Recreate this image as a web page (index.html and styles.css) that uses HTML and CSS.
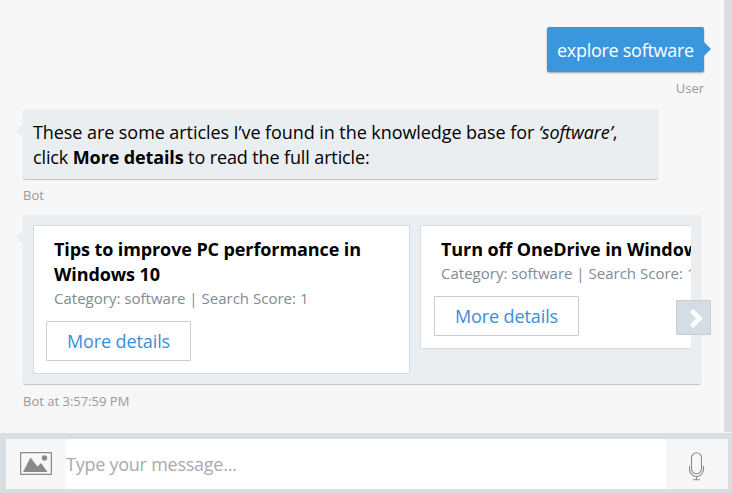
FILE: index.html
```html
<!DOCTYPE html>
<html lang="en">
<head>
<meta charset="utf-8">
<title>Chat</title>
<link rel="stylesheet" href="styles.css">
</head>
<body>
<main class="messages">
  <section class="message from-user">
    <div class="bubble user-bubble">explore software</div>
    <div class="meta">User</div>
  </section>
  <section class="message">
    <div class="bubble bot-bubble text-bubble">
      <div class="line first-line">These are some articles I’ve found in the knowledge base for <em>‘software’</em>,</div>
      <div class="line second-line">click <strong>More details</strong> to read the full article:</div>
    </div>
    <div class="meta">Bot</div>
  </section>
  <section class="message">
    <div class="bubble bot-bubble carousel">
      <div class="scroller">
        <article class="card">
          <h1>Tips to improve PC performance in<br>Windows 10</h1>
          <p>Category: software | Search Score: 1</p>
          <button class="action">More details</button>
        </article>
        <article class="card">
          <h1>Turn off OneDrive in Windows 10</h1>
          <p>Category: software | Search Score: 1</p>
          <button class="action">More details</button>
        </article>
      </div>
      <button class="next" aria-label="Next">
        <svg width="33" height="33" viewBox="0 0 33 33"><path d="M14.500 9.500l8 8-8 8" fill="none" stroke="#fff" stroke-width="4.600"/></svg>
      </button>
    </div>
    <div class="meta">Bot at 3:57:59 PM</div>
  </section>
</main>
<footer class="console">
  <div class="upload">
    <svg width="32" height="23" viewBox="0 0 32 23"><rect x=".6" y=".6" width="30.8" height="21.8" rx=".5" fill="none" stroke="#8a8a8a" stroke-width="1.2"/><path d="M3 20L10.500 5.500l7 9 3.500-3.500 6.500 9z" fill="#8a8a8a"/><circle cx="24.500" cy="6" r="2.700" fill="#8a8a8a"/></svg>
  </div>
  <input type="text" placeholder="Type your message...">
  <div class="mic">
    <svg width="16" height="29" viewBox="0 0 16 29" fill="none" stroke="#8a8a8a" stroke-width="1.100"><rect x="2.500" y=".8" width="10" height="21" rx="5"/><path d="M.5 14v3.500a7 7 0 0 0 14 0V14M7.500 24.500v3M4 27.700h7"/></svg>
  </div>
</footer>
</body>
</html>
```
FILE: styles.css
```css
* { box-sizing: border-box; }
body {
  margin: 0;
  width: 732px;
  height: 493px;
  overflow: hidden;
  display: flex;
  flex-direction: column;
  background: #f7f7f7;
  font-family: "Open Sans", "Noto Sans", sans-serif;
  font-size: 18px;
  line-height: 25px;
  color: #000;
}
.messages {
  height: 432px;
  padding: 27px 20px 0 23px;
  border-right: 8px solid #dadee1;
}
.message { display: flex; flex-direction: column; align-items: flex-start; }
.from-user { align-items: flex-end; }
.bubble {
  position: relative;
  border-radius: 2px;
  box-shadow: 0 1px 2px rgba(0, 0, 0, .35);
}
.bubble::before {
  content: "";
  position: absolute;
  top: 15px;
  border: 7px solid transparent;
}
.user-bubble {
  width: 157px;
  height: 45px;
  padding: 11px 10px 9px;
  background: #3a96dd;
  color: #fff;
  white-space: nowrap;
  letter-spacing: -.28px;
}
.user-bubble::before { right: -14px; border-left-color: #3a96dd; }
.meta {
  margin-top: 6px;
  height: 23px;
  line-height: 21px;
  font-size: 13px;
  color: #999;
}
.from-user .meta { height: 31px; }
.bot-bubble { background: #eaeef1; box-shadow: 0 1px 1px rgba(0, 0, 0, .22); }
.bot-bubble::before { left: -14px; border-right-color: #eaeef1; }
.text-bubble { width: 635px; height: 70px; padding: 11px 10px 9px; }
.text-bubble + .meta { height: 30px; }
.line { white-space: nowrap; }
.first-line { letter-spacing: -.07px; }
.second-line { letter-spacing: -.12px; }
.carousel { width: 678px; height: 169px; padding: 10px; }
.carousel + .meta { margin-top: 7px; }
.scroller { width: 658px; display: flex; align-items: flex-start; gap: 10px; overflow: hidden; }
.card {
  flex: 0 0 377px;
  padding: 11px 12px 12px;
  border: 1px solid #d2dde5;
  background: #fff;
}
.card h1 {
  margin: 0 0 0 8px;
  font-size: 18px;
  line-height: 25px;
  font-weight: 700;
  letter-spacing: -.1px;
  white-space: nowrap;
}
.card p {
  margin: 0 0 10px 8px;
  height: 24px;
  font-size: 15px;
  line-height: 22px;
  letter-spacing: .01px;
  color: #808c95;
  white-space: nowrap;
}
.action {
  display: block;
  width: 145px;
  height: 40px;
  padding: 0;
  border: 1px solid #ccc;
  border-radius: 1px;
  background: #fff;
  color: #3a8ddd;
  font: inherit;
  letter-spacing: -.1px;
}
.card + .card .action { margin-left: 1px; }
.next {
  position: absolute;
  left: 653px;
  top: 85px;
  width: 35px;
  height: 35px;
  padding: 0;
  border: 1px solid #ccc;
  border-radius: 1px;
  background: #d2dde5;
}
.next svg, .upload svg, .mic svg { display: block; }
.console {
  height: 60px;
  margin-top: 1px;
  display: flex;
  border: solid #dadee1;
  border-width: 6px 4px 4px 6px;
}
.upload { width: 60px; padding: 13px 0 0 14px; }
.console input {
  width: 600px;
  padding: 0;
  border: 0;
  border-radius: 2px;
  background: #fff;
  font: inherit;
  letter-spacing: -.25px;
}
.console input::placeholder { color: #aaa; opacity: 1; }
.mic { padding: 13px 0 0 23px; }
```
